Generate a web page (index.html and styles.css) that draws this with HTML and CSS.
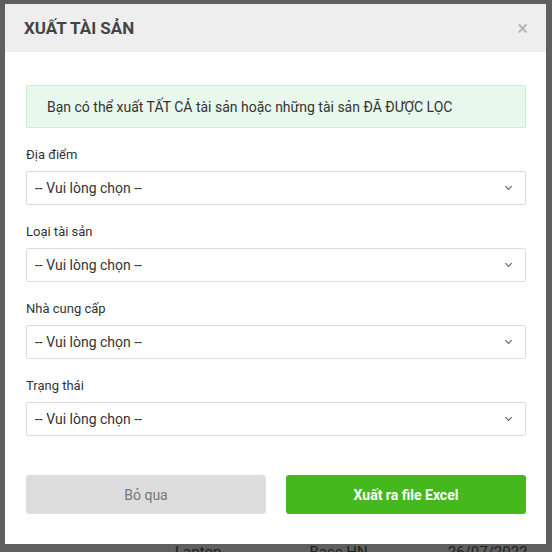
FILE: index.html
```html
<!DOCTYPE html>
<html lang="vi">
<head>
<meta charset="utf-8">
<title>Xuất tài sản</title>
<link rel="stylesheet" href="styles.css">
</head>
<body>
<div class="modal">
  <div class="modal-header">
    <h2 class="modal-title">XUẤT TÀI SẢN</h2>
    <span class="close">&times;</span>
  </div>
  <div class="modal-body">
    <div class="alert">Bạn có thể xuất TẤT CẢ tài sản hoặc những tài sản ĐÃ ĐƯỢC LỌC</div>
    <div class="field">
      <label class="label">Địa điểm</label>
      <div class="select"><span>-- Vui lòng chọn --</span><svg class="chev" viewBox="0 0 10 6" width="9" height="6"><path d="M1.5 1 L5 4.6 L8.5 1" fill="none" stroke="#666" stroke-width="1.3"/></svg></div>
    </div>
    <div class="field">
      <label class="label">Loại tài sản</label>
      <div class="select"><span>-- Vui lòng chọn --</span><svg class="chev" viewBox="0 0 10 6" width="9" height="6"><path d="M1.5 1 L5 4.6 L8.5 1" fill="none" stroke="#666" stroke-width="1.3"/></svg></div>
    </div>
    <div class="field">
      <label class="label">Nhà cung cấp</label>
      <div class="select"><span>-- Vui lòng chọn --</span><svg class="chev" viewBox="0 0 10 6" width="9" height="6"><path d="M1.5 1 L5 4.6 L8.5 1" fill="none" stroke="#666" stroke-width="1.3"/></svg></div>
    </div>
    <div class="field">
      <label class="label">Trạng thái</label>
      <div class="select"><span>-- Vui lòng chọn --</span><svg class="chev" viewBox="0 0 10 6" width="9" height="6"><path d="M1.5 1 L5 4.6 L8.5 1" fill="none" stroke="#666" stroke-width="1.3"/></svg></div>
    </div>
    <div class="actions">
      <button class="btn btn-cancel">Bỏ qua</button>
      <button class="btn btn-primary">Xuất ra file Excel</button>
    </div>
  </div>
</div>
<div class="behind">
  <span class="c1">Laptop</span>
  <span class="c2">Base HN</span>
  <span class="c3">26/07/2022</span>
</div>
</body>
</html>
```

FILE: styles.css
```css
html, body {
  margin: 0;
  padding: 0;
}
body {
  width: 552px;
  height: 552px;
  overflow: hidden;
  background: #5f5f5f;
  font-family: Roboto, "Noto Sans", sans-serif;
  color: #333;
  padding: 4px 0 0 5px;
  box-sizing: border-box;
}
.modal {
  width: 541px;
  height: 540px;
  background: #fff;
  box-sizing: border-box;
  display: flex;
  flex-direction: column;
}
.modal-header {
  height: 48px;
  background: #eeeeee;
  display: flex;
  align-items: center;
  justify-content: space-between;
  padding: 0 18px 0 19px;
  box-sizing: border-box;
}
.modal-title {
  margin: 0;
  font-size: 17px;
  font-weight: 700;
  color: #444;
}
.close {
  font-size: 20px;
  color: #b0b0b0;
  line-height: 1;
}
.modal-body {
  padding: 33px 20px 0 21px;
  display: flex;
  flex-direction: column;
}
.alert {
  height: 43px;
  box-sizing: border-box;
  background: #e9f8ed;
  border: 1px solid #cdebd5;
  border-radius: 2px;
  padding: 0 20px;
  display: flex;
  align-items: center;
  font-size: 14px;
  color: #333;
}
.field {
  display: flex;
  flex-direction: column;
}
.label {
  margin-top: 19px;
  font-size: 13px;
  line-height: 16px;
  color: #333;
  margin-bottom: 8px;
}
.select {
  height: 34px;
  box-sizing: border-box;
  border: 1px solid #dcdcdc;
  border-radius: 2px;
  display: flex;
  align-items: center;
  justify-content: space-between;
  padding: 0 12px 0 8px;
  font-size: 14px;
  color: #333;
}
.chev {
  display: block;
}
.actions {
  margin-top: 39px;
  display: flex;
  gap: 20px;
}
.btn {
  flex: 1;
  height: 39px;
  border: none;
  border-radius: 3px;
  font-family: Roboto, "Noto Sans", sans-serif;
  font-size: 14px;
}
.btn-cancel {
  background: #dddddd;
  color: #777;
}
.btn-primary {
  background: #44b81c;
  color: #fff;
  font-weight: 700;
}
.behind {
  display: flex;
  margin-top: 0;
  font-size: 15px;
  color: #1e1e1e;
  line-height: 16px;
}
.c1 { margin-left: 170px; }
.c2 { margin-left: 88px; }
.c3 { margin-left: 80px; }
```
